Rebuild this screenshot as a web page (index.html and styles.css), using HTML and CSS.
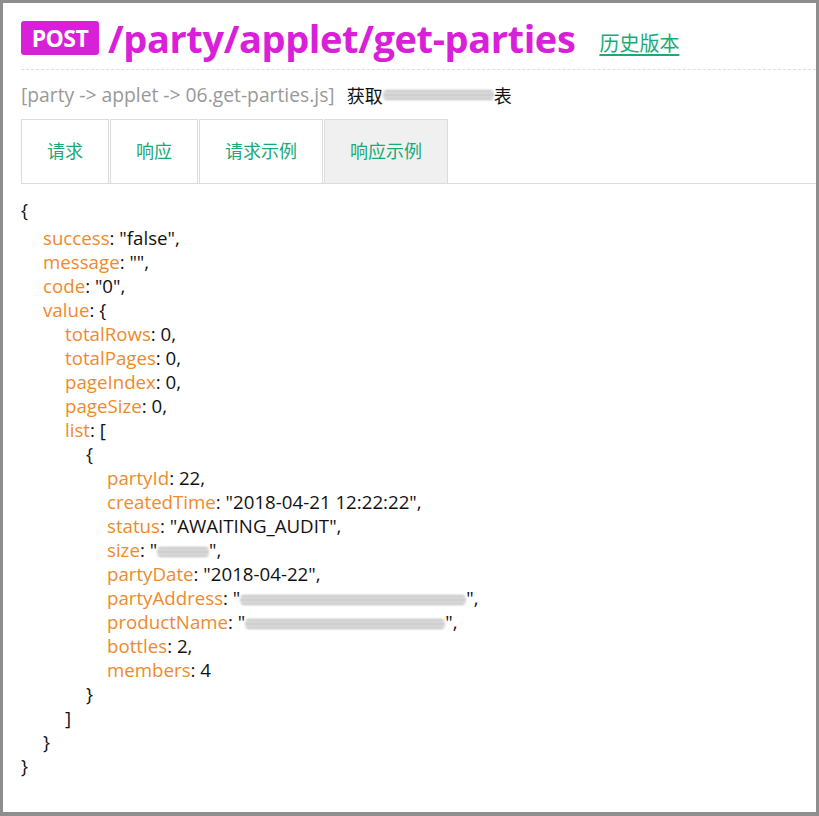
FILE: index.html
```html
<!DOCTYPE html>
<html lang="zh">
<head>
<meta charset="utf-8">
<title>/party/applet/get-parties</title>
<link rel="stylesheet" href="styles.css">
</head>
<body>
<div class="frame">
  <div class="header">
    <span class="badge">POST</span>
    <span class="path">/party/applet/get-parties</span>
    <a class="history" href="#">历史版本</a>
  </div>
  <div class="subtitle">
    <span class="file">[party -&gt; applet -&gt; 06.get-parties.js]</span>
    <span class="desc">获取<span class="smear wide"></span>表</span>
  </div>
  <div class="tabs">
    <div class="tab t-short">请求</div>
    <div class="tab t-short">响应</div>
    <div class="tab t-long">请求示例</div>
    <div class="tab t-long active">响应示例</div>
  </div>
  <div class="code">
    <div class="ln first">{</div>
    <div class="ln i1"><span class="k">success</span>: "false",</div>
    <div class="ln i1"><span class="k">message</span>: "",</div>
    <div class="ln i1"><span class="k">code</span>: "0",</div>
    <div class="ln i1"><span class="k">value</span>: {</div>
    <div class="ln i2"><span class="k">totalRows</span>: 0,</div>
    <div class="ln i2"><span class="k">totalPages</span>: 0,</div>
    <div class="ln i2"><span class="k">pageIndex</span>: 0,</div>
    <div class="ln i2"><span class="k">pageSize</span>: 0,</div>
    <div class="ln i2"><span class="k">list</span>: [</div>
    <div class="ln i3">{</div>
    <div class="ln i4"><span class="k">partyId</span>: 22,</div>
    <div class="ln i4"><span class="k">createdTime</span>: "2018-04-21 12:22:22",</div>
    <div class="ln i4"><span class="k">status</span>: "AWAITING_AUDIT",</div>
    <div class="ln i4"><span class="k">size</span>: "<span class="smear s-size"></span>",</div>
    <div class="ln i4"><span class="k">partyDate</span>: "2018-04-22",</div>
    <div class="ln i4"><span class="k">partyAddress</span>: "<span class="smear s-addr"></span>",</div>
    <div class="ln i4"><span class="k">productName</span>: "<span class="smear s-prod"></span>",</div>
    <div class="ln i4"><span class="k">bottles</span>: 2,</div>
    <div class="ln i4"><span class="k">members</span>: 4</div>
    <div class="ln i3">}</div>
    <div class="ln i2">]</div>
    <div class="ln i1">}</div>
    <div class="ln">}</div>
  </div>
</div>
</body>
</html>
```
FILE: styles.css
```css
html, body {
  margin: 0;
  padding: 0;
  background: #ffffff;
}
.frame {
  box-sizing: border-box;
  width: 819px;
  height: 816px;
  border: 3px solid #8e8e8e;
  border-bottom-width: 4px;
  padding: 18px 0 0 18px;
  font-family: "Open Sans", "Noto Sans CJK SC", sans-serif;
  color: #111;
  overflow: hidden;
}
.header {
  display: flex;
  align-items: center;
  height: 34px;
  padding-bottom: 14px;
  border-bottom: 1px dashed #dedede;
}
.badge {
  display: inline-block;
  background: #d920d9;
  color: #fff;
  font-weight: 700;
  font-size: 23px;
  line-height: 34px;
  height: 34px;
  width: 78px;
  text-align: center;
  border-radius: 3px;
  letter-spacing: -0.5px;
}
.path {
  margin-left: 9px;
  color: #d920d9;
  font-weight: 700;
  font-size: 38px;
  line-height: 34px;
  letter-spacing: -0.4px;
}
.history {
  margin-left: 24px;
  margin-top: 8px;
  color: #1aaa78;
  font-size: 20px;
  font-family: "Noto Sans CJK SC", sans-serif;
  text-decoration: underline;
  text-underline-offset: 3px;
}
.subtitle {
  display: flex;
  align-items: center;
  height: 49px;
  font-size: 19.3px;
}
.file {
  color: #999;
}
.desc {
  margin-left: 12px;
  color: #111;
  font-family: "Noto Sans CJK SC", sans-serif;
  font-size: 18px;
  display: inline-flex;
  align-items: center;
}
.smear {
  display: inline-block;
  height: 10px;
  background: repeating-linear-gradient(180deg, #bdbdbd 0 2px, #e8e8e8 2px 4px);
  filter: blur(1px);
  vertical-align: middle;
  border-radius: 4px;
}
.wide { width: 111px; }
.s-size { width: 52px; }
.s-addr { width: 226px; }
.s-prod { width: 200px; }
.tabs {
  display: flex;
  height: 64px;
  border-bottom: 1px solid #dcdcdc;
}
.tab {
  box-sizing: border-box;
  display: flex;
  align-items: center;
  justify-content: center;
  padding-bottom: 3px;
  border: 1px solid #dcdcdc;
  border-bottom: none;
  margin-right: 1px;
  color: #1aaa78;
  font-family: "Noto Sans CJK SC", sans-serif;
  font-size: 18px;
}
.t-short { width: 88px; }
.t-long { width: 124px; }
.tab.active {
  background: #f0f0f0;
}
.code {
  padding-top: 18px;
  font-size: 18.7px;
  line-height: 24px;
}
.ln { white-space: pre; }
.first { margin-bottom: 4px; margin-top: -4px; }
.i1 { padding-left: 22px; }
.i2 { padding-left: 44px; }
.i3 { padding-left: 65px; }
.i4 { padding-left: 86px; }
.k { color: #ef8a2d; }
```
